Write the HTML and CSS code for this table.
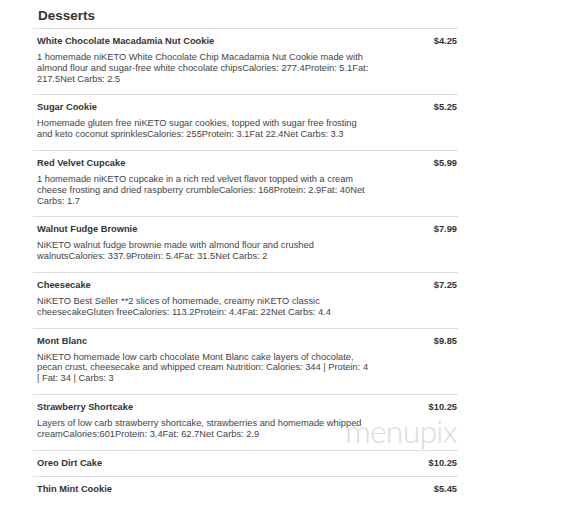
FILE: index.html
```html
<!DOCTYPE html>
<html lang="en">
<head>
<meta charset="utf-8">
<title>Desserts</title>
<link rel="stylesheet" href="styles.css">
</head>
<body>
<div class="menu">
  <h2 class="section-title">Desserts</h2>
  <ul class="items">
    <li class="item">
      <div class="name">White Chocolate Macadamia Nut Cookie</div>
      <div class="price">$4.25</div>
      <div class="desc">1 homemade niKETO White Chocolate Chip Macadamia Nut Cookie made with almond flour and sugar-free white chocolate chipsCalories: 277.4Protein: 5.1Fat: 217.5Net Carbs: 2.5</div>
    </li>
    <li class="item">
      <div class="name">Sugar Cookie</div>
      <div class="price">$5.25</div>
      <div class="desc">Homemade gluten free niKETO sugar cookies, topped with sugar free frosting and keto coconut sprinklesCalories: 255Protein: 3.1Fat 22.4Net Carbs: 3.3</div>
    </li>
    <li class="item">
      <div class="name">Red Velvet Cupcake</div>
      <div class="price">$5.99</div>
      <div class="desc">1 homemade niKETO cupcake in a rich red velvet flavor topped with a cream cheese frosting and dried raspberry crumbleCalories: 168Protein: 2.9Fat: 40Net Carbs: 1.7</div>
    </li>
    <li class="item">
      <div class="name">Walnut Fudge Brownie</div>
      <div class="price">$7.99</div>
      <div class="desc">NiKETO walnut fudge brownie made with almond flour and crushed walnutsCalories: 337.9Protein: 5.4Fat: 31.5Net Carbs: 2</div>
    </li>
    <li class="item">
      <div class="name">Cheesecake</div>
      <div class="price">$7.25</div>
      <div class="desc">NiKETO Best Seller **2 slices of homemade, creamy niKETO classic cheesecakeGluten freeCalories: 113.2Protein: 4.4Fat: 22Net Carbs: 4.4</div>
    </li>
    <li class="item">
      <div class="name">Mont Blanc</div>
      <div class="price">$9.85</div>
      <div class="desc">NiKETO homemade low carb chocolate Mont Blanc cake layers of chocolate, pecan crust, cheesecake and whipped cream Nutrition: Calories: 344 | Protein: 4 | Fat: 34 | Carbs: 3</div>
    </li>
    <li class="item">
      <div class="name">Strawberry Shortcake</div>
      <div class="price">$10.25</div>
      <div class="desc">Layers of low carb strawberry shortcake, strawberries and homemade whipped creamCalories:601Protein: 3.4Fat: 62.7Net Carbs: 2.9</div>
    </li>
    <li class="item">
      <div class="name">Oreo Dirt Cake</div>
      <div class="price">$10.25</div>
    </li>
    <li class="item">
      <div class="name">Thin Mint Cookie</div>
      <div class="price">$5.45</div>
    </li>
  </ul>
  <div class="watermark">menupix</div>
</div>
</body>
</html>
```

FILE: styles.css
```css
html, body {
  margin: 0;
  padding: 0;
  background: #ffffff;
}

body {
  font-family: "Liberation Sans", Arial, sans-serif;
  color: #333333;
}

.menu {
  position: relative;
  margin-left: 33px;
  width: 425px;
}

.section-title {
  margin: 8px 0 0 0;
  padding: 0 0 0 5px;
  font-size: 13.5px;
  line-height: 15.5px;
  font-weight: bold;
  color: #333333;
  height: 20px;
}

.items {
  list-style: none;
  margin: 0;
  padding: 0;
}

.item {
  display: grid;
  grid-template-columns: 333px 1fr;
  padding: 6px 1px 7px 4px;
  border-top: 1px solid #dedede;
}

.name {
  grid-column: 1;
  grid-row: 1;
  font-size: 9.3px;
  line-height: 12px;
  font-weight: bold;
  color: #333333;
}

.price {
  grid-column: 2;
  grid-row: 1;
  justify-self: end;
  font-size: 9.3px;
  line-height: 12px;
  font-weight: bold;
  color: #333333;
}

.desc {
  grid-column: 1 / span 2;
  grid-row: 2;
  max-width: 333px;
  margin-top: 5px;
  margin-bottom: 3px;
  font-size: 9.3px;
  line-height: 10.8px;
  color: #444444;
}

.watermark {
  position: absolute;
  left: 312px;
  top: 407px;
  font-family: Lato, "Open Sans", sans-serif;
  font-weight: 300;
  font-size: 32px;
  line-height: 32px;
  letter-spacing: -0.8px;
  color: #dcdcdc;
}
```
